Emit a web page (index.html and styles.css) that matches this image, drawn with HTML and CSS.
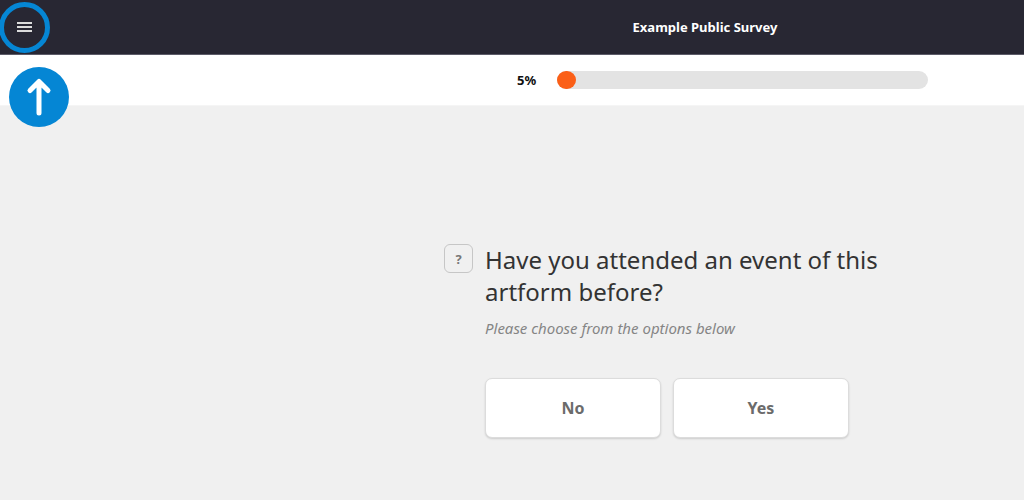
FILE: index.html
```
<!DOCTYPE html>
<html lang="en">
<head>
    <meta charset="UTF-8">
    <meta name="viewport" content="width=device-width, initial-scale=1.0">
    <title>Example Public Survey</title>
    <link rel="stylesheet" href="styles.css">
</head>
<body>
    <header class="topbar">
        <button type="button" class="menu-button" aria-label="Menu">
            <svg width="16" height="12" viewBox="0 0 16 12" fill="#dcdcdc">
                <rect x="1" y="1" width="15" height="2"/>
                <rect x="1" y="5" width="15" height="2"/>
                <rect x="1" y="9" width="15" height="2"/>
            </svg>
        </button>
        <h1>Example Public Survey</h1>
    </header>

    <div class="progress-row">
        <div class="column progress">
            <span class="percent" id="percent">5%</span>
            <div class="track" role="progressbar" aria-labelledby="percent" aria-valuenow="5" aria-valuemin="0" aria-valuemax="100">
                <div class="bar" style="width: 5%"></div>
            </div>
        </div>
    </div>

    <main>
        <div class="column question">
            <button type="button" class="help" aria-label="Help">?</button>
            <div class="body">
                <h2>Have you attended an event of this artform before?</h2>
                <p>Please choose from the options below</p>
                <div class="answers">
                    <button type="button">No</button>
                    <button type="button">Yes</button>
                </div>
            </div>
        </div>
    </main>

    <!-- pointer to the menu button -->
    <div class="hint-ring"></div>
    <div class="hint-arrow">
        <svg width="60" height="60" viewBox="0 0 60 60" fill="none" stroke="#fff" stroke-width="5" stroke-linecap="round" stroke-linejoin="round">
            <path d="M30 46V14.500M21 23.500L30 14.500L39 23.500"/>
        </svg>
    </div>
</body>
</html>
```
FILE: styles.css
```
* {
    box-sizing: border-box;
}

body {
    margin: 0;
    position: relative;
    min-height: 100vh;
    background: #f0f0f0;
    color: #333;
    font-family: "Noto Sans", sans-serif;
}

button {
    font-family: inherit;
    cursor: pointer;
}

.topbar {
    display: flex;
    align-items: center;
    height: 55px;
    background: #282733;
    border-bottom: 1px solid #5c5b68;
}

.menu-button {
    display: flex;
    align-items: center;
    justify-content: center;
    width: 48px;
    height: 48px;
    margin-right: 338px;
    padding: 0;
    background: none;
    border: none;
}

.topbar h1 {
    flex: 1;
    margin: 0;
    color: #fff;
    font-size: 13px;
    line-height: 18px;
    text-align: center;
}

.progress-row {
    padding: 16px 0 16px 386px;
    background: #fff;
    border-bottom: 1px solid #f5f5f5;
}

.column {
    display: flex;
    max-width: 522px;
    margin: 0 auto;
}

.progress {
    align-items: center;
    padding: 0 38px 0 73px;
}

.percent {
    width: 40px;
    color: #111;
    font-size: 13px;
    font-weight: bold;
    line-height: 18px;
}

.track {
    flex: 1;
    height: 18px;
    background: #e3e3e3;
    border-radius: 9px;
}

.bar {
    height: 18px;
    background: #fb5f17;
    border-radius: 9px;
}

main {
    padding: 138px 0 60px 386px;
}

.help {
    width: 29px;
    height: 29px;
    margin-right: 12px;
    padding: 0;
    background: none;
    border: 1px solid #c6c6c6;
    border-radius: 6px;
    color: #777;
    font-size: 13px;
    font-weight: bold;
}

.body {
    flex: 1;
}

.body h2 {
    max-width: 420px;
    margin: 0;
    font-size: 24px;
    font-weight: normal;
    line-height: 32px;
}

.body p {
    margin: 8px 0 0;
    color: #858585;
    font-size: 15px;
    font-style: italic;
    line-height: 24px;
}

.answers {
    display: flex;
    gap: 12px;
    margin-top: 38px;
}

.answers button {
    width: 176px;
    height: 60px;
    background: #fff;
    border: 1px solid #dcdcdc;
    border-radius: 7px;
    box-shadow: 0 1px 2px rgba(0, 0, 0, 0.15);
    color: #6b6b6b;
    font-size: 16px;
    font-weight: bold;
}

.hint-ring {
    position: absolute;
    top: 2px;
    left: -1px;
    width: 51px;
    height: 51px;
    border: 5px solid #0586d4;
    border-radius: 50%;
    pointer-events: none;
}

.hint-arrow {
    position: absolute;
    top: 67px;
    left: 9px;
    width: 60px;
    height: 60px;
    background: #0586d4;
    border-radius: 50%;
}
```
